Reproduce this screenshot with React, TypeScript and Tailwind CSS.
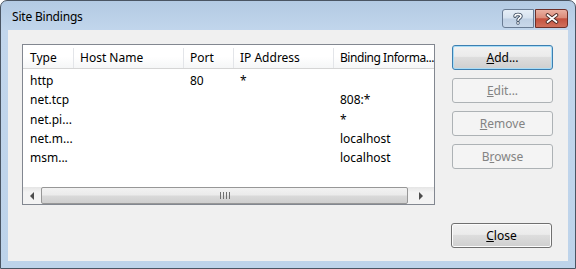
import React from "react";

const cols = [51, 110, 50, 100];

function Cell({ w, first, children, divider }: { w?: number; first?: boolean; children?: React.ReactNode; divider?: boolean }) {
  return (
    <div
      className={`flex h-full shrink-0 items-center overflow-hidden whitespace-nowrap ${first ? "pl-[7px]" : "pl-[6px]"} ${divider ? "border-r border-[#e3e5e9]" : ""} ${w === undefined ? "flex-1" : ""}`}
      style={w !== undefined ? { width: w } : undefined}
    >
      {children}
    </div>
  );
}

const rows: string[][] = [
  ["http", "", "80", "*", ""],
  ["net.tcp", "", "", "", "808:*"],
  ["net.pi...", "", "", "", "*"],
  ["net.m...", "", "", "", "localhost"],
  ["msm...", "", "", "", "localhost"],
];

function Btn({ children, disabled, def }: { children: React.ReactNode; disabled?: boolean; def?: boolean }) {
  if (disabled) {
    return (
      <div className="flex h-[25px] w-[101px] items-center justify-center rounded-[3px] border border-[#adb2b5] bg-[#f4f4f4] text-[#838383]">
        {children}
      </div>
    );
  }
  return (
    <div
      className={`flex h-[25px] w-[101px] items-center justify-center rounded-[3px] border ${def ? "border-[#3c7fb1] shadow-[inset_0_0_0_1px_#a8dcf6]" : "border-[#707070] shadow-[inset_0_0_0_1px_#fcfcfc]"} bg-[linear-gradient(to_bottom,#f2f2f2_0%,#ebebeb_45%,#dddddd_50%,#cfcfcf_100%)] text-black`}
    >
      {children}
    </div>
  );
}

export default function App() {
  return (
    <div className="h-[269px] w-[576px] bg-white font-['Noto_Sans',sans-serif] text-[12px] leading-none text-black">
      <div className="flex h-[269px] w-[576px] flex-col rounded-t-[7px] border border-[#4a5563] bg-[linear-gradient(to_bottom,#b3cae3_0px,#c2d6ec_30px,#bdd3ea_100%)]">
        {/* title bar */}
        <div className="flex h-[29px] shrink-0 items-start">
          <div className="pl-[11px] pt-[10px] text-[12px] tracking-[-0.2px]">Site Bindings</div>
          <div className="ml-auto mr-[7px] mt-[8px] flex">
            <div className="relative flex h-[19px] w-[32px] items-center justify-center rounded-l-[3px] border border-[#6a7c94] bg-[linear-gradient(to_bottom,#e6eef7_0%,#d6e2ef_48%,#bfd0e4_52%,#c9d8ea_100%)]">
              <svg width="12" height="13" viewBox="0 0 12 13">
                <path d="M3 4.2 C3 1.8 9 1.8 9 4.2 C9 6 6 6 6 8.2" fill="none" stroke="#3a4a5e" strokeWidth="3.4" strokeLinecap="round" />
                <circle cx="6" cy="11" r="1.7" fill="#3a4a5e" />
                <path d="M3 4.2 C3 1.8 9 1.8 9 4.2 C9 6 6 6 6 8.2" fill="none" stroke="#ffffff" strokeWidth="1.6" strokeLinecap="round" />
                <circle cx="6" cy="11" r="0.9" fill="#ffffff" />
              </svg>
            </div>
            <div className="ml-[1px] flex h-[19px] w-[33px] items-center justify-center rounded-r-[3px] border border-[#6e2f28] bg-[linear-gradient(to_bottom,#eab0a2_0%,#dc8c7a_45%,#c4513e_52%,#d0705c_100%)]">
              <svg width="14" height="11" viewBox="0 0 14 11">
                <path d="M2.5 2 L11.5 9 M11.5 2 L2.5 9" stroke="#4a2a26" strokeWidth="3.6" strokeLinecap="round" />
                <path d="M2.5 2 L11.5 9 M11.5 2 L2.5 9" stroke="#ffffff" strokeWidth="1.8" strokeLinecap="round" />
              </svg>
            </div>
          </div>
        </div>
        {/* client */}
        <div className="mx-[7px] mb-[7px] flex flex-1 bg-[#f0f0f0] pb-[13px] pl-[14px] pt-[14px]">
          {/* listview */}
          <div className="flex h-[161px] w-[413px] shrink-0 flex-col border border-[#828790] bg-white">
            <div className="flex h-[24px] shrink-0 border-b border-[#d5d5d5] bg-[linear-gradient(to_bottom,#ffffff_0%,#ffffff_50%,#f5f6f7_100%)] pt-[3px]">
              <Cell w={cols[0]} first divider>Type</Cell>
              <Cell w={cols[1]} divider>Host Name</Cell>
              <Cell w={cols[2]} divider>Port</Cell>
              <Cell w={cols[3]} divider>IP Address</Cell>
              <Cell><span className="tracking-[-0.45px]">Binding Informa...</span></Cell>
            </div>
            <div className="flex flex-1 flex-col pt-[2px]">
              {rows.map((r, i) => (
                <div key={i} className="flex h-[19.25px] pt-[1px]">
                  <Cell w={cols[0]} first>{r[0]}</Cell>
                  <Cell w={cols[1]}>{r[1]}</Cell>
                  <Cell w={cols[2]}>{r[2]}</Cell>
                  <Cell w={cols[3]}>{r[3]}</Cell>
                  <Cell>{r[4]}</Cell>
                </div>
              ))}
            </div>
            {/* scrollbar */}
            <div className="flex h-[17px] shrink-0 items-stretch bg-[linear-gradient(to_bottom,#e5e5e5_0%,#f3f3f3_30%,#f3f3f3_100%)]">
              <div className="flex w-[18px] items-center justify-center">
                <div className="h-0 w-0 border-y-[4px] border-r-[4px] border-y-transparent border-r-[#4d4d4d]" />
              </div>
              <div className="flex flex-1 items-center justify-center rounded-[2px] border border-[#979797] bg-[linear-gradient(to_bottom,#f2f2f2_0%,#ebebeb_45%,#d9d9d9_55%,#cfcfcf_100%)]">
                <div className="flex gap-[2px]">
                  <div className="h-[7px] w-[1px] bg-[#707070]" />
                  <div className="h-[7px] w-[1px] bg-[#707070]" />
                  <div className="h-[7px] w-[1px] bg-[#707070]" />
                  <div className="h-[7px] w-[1px] bg-[#707070]" />
                </div>
              </div>
              <div className="flex w-[26px] items-center justify-center">
                <div className="h-0 w-0 border-y-[4px] border-l-[4px] border-y-transparent border-l-[#4d4d4d]" />
              </div>
            </div>
          </div>
          {/* buttons */}
          <div className="ml-[17px] flex flex-col">
            <div className="mt-[1px] flex flex-col gap-[8px]">
              <Btn def><span><u>A</u>dd...</span></Btn>
              <Btn disabled><span><u>E</u>dit...</span></Btn>
              <Btn disabled><span><u>R</u>emove</span></Btn>
              <Btn disabled><span>B<u>r</u>owse</span></Btn>
            </div>
            <div className="mt-auto -ml-[1px]">
              <Btn><span><u>C</u>lose</span></Btn>
            </div>
          </div>
        </div>
      </div>
    </div>
  );
}
